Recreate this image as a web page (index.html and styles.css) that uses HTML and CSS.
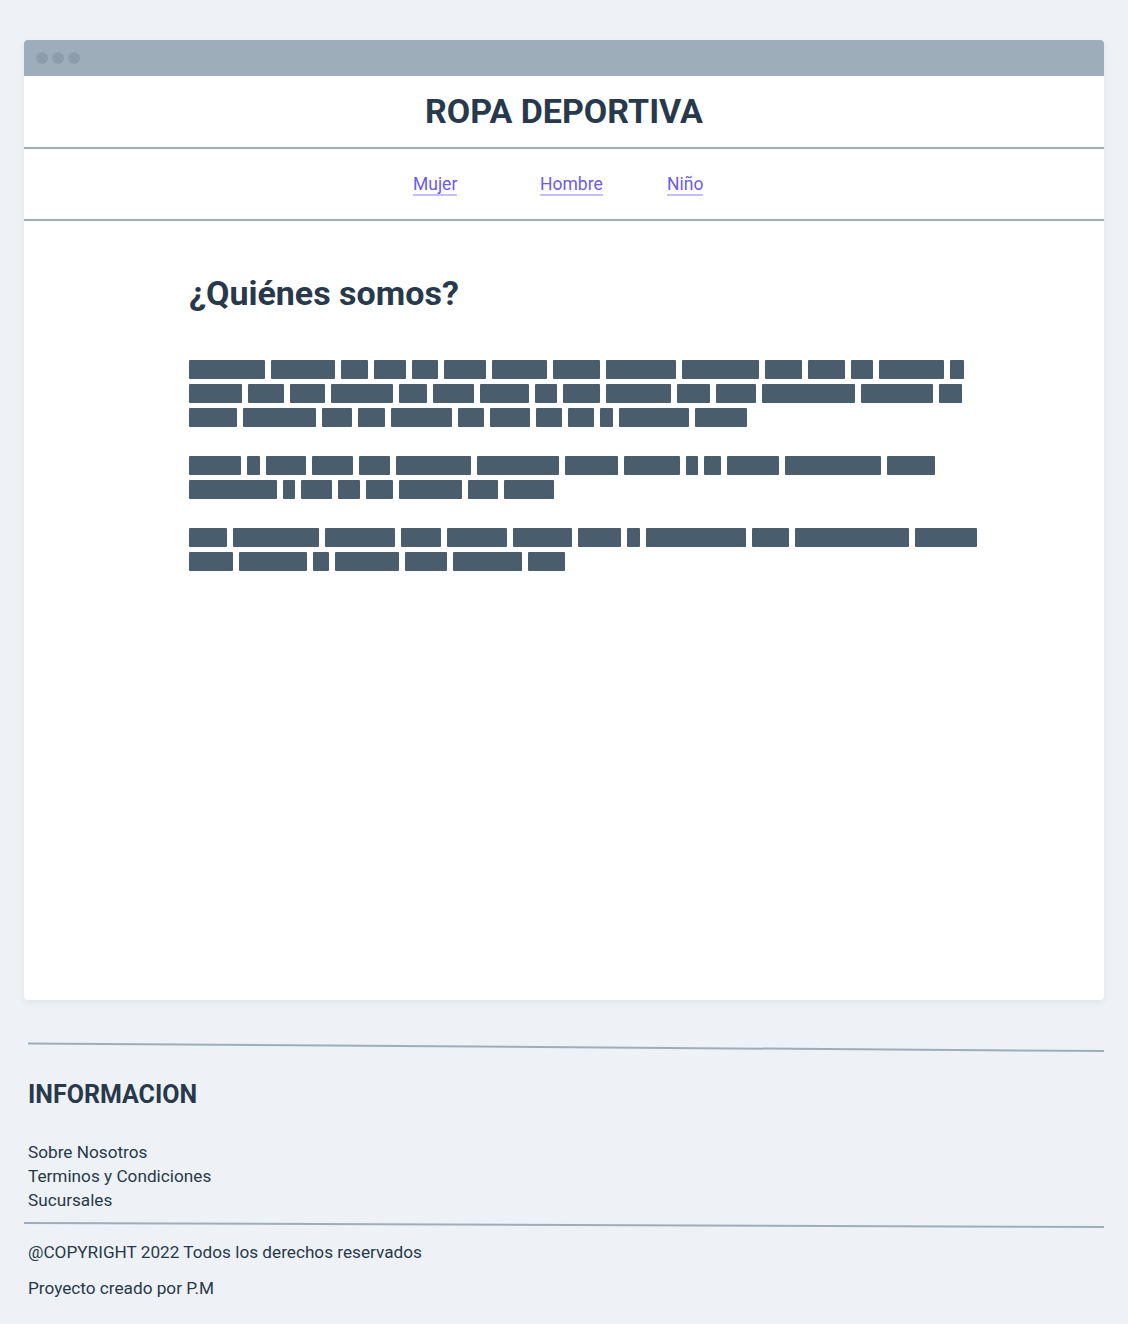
FILE: index.html
```html
<!DOCTYPE html>
<html lang="es">
<head>
<meta charset="utf-8">
<title>Ropa Deportiva</title>
<link rel="stylesheet" href="styles.css">
</head>
<body>
<div class="window">
  <div class="titlebar">
    <span class="dot"></span><span class="dot"></span><span class="dot"></span>
  </div>
  <header class="site-header">
    <h1 class="brand">ROPA DEPORTIVA</h1>
  </header>
  <nav class="nav">
    <ul class="nav-list">
      <li class="nav-item"><a class="nav-link" href="#">Mujer</a></li>
      <li class="nav-item"><a class="nav-link" href="#">Hombre</a></li>
      <li class="nav-item"><a class="nav-link" href="#">Niño</a></li>
    </ul>
  </nav>
  <main class="main">
    <h2 class="title">¿Quiénes somos?</h2>
    <div class="para">
      <div class="line"><span class="w" style="width:76px"></span><span class="w" style="width:64px"></span><span class="w" style="width:27px"></span><span class="w" style="width:32px"></span><span class="w" style="width:26px"></span><span class="w" style="width:42px"></span><span class="w" style="width:55px"></span><span class="w" style="width:47px"></span><span class="w" style="width:70px"></span><span class="w" style="width:77px"></span><span class="w" style="width:37px"></span><span class="w" style="width:37px"></span><span class="w" style="width:22px"></span><span class="w" style="width:65px"></span><span class="w" style="width:14px"></span></div>
      <div class="line"><span class="w" style="width:53px"></span><span class="w" style="width:36px"></span><span class="w" style="width:35px"></span><span class="w" style="width:62px"></span><span class="w" style="width:28px"></span><span class="w" style="width:41px"></span><span class="w" style="width:49px"></span><span class="w" style="width:22px"></span><span class="w" style="width:37px"></span><span class="w" style="width:65px"></span><span class="w" style="width:33px"></span><span class="w" style="width:40px"></span><span class="w" style="width:93px"></span><span class="w" style="width:72px"></span><span class="w" style="width:23px"></span></div>
      <div class="line"><span class="w" style="width:48px"></span><span class="w" style="width:73px"></span><span class="w" style="width:30px"></span><span class="w" style="width:27px"></span><span class="w" style="width:61px"></span><span class="w" style="width:26px"></span><span class="w" style="width:40px"></span><span class="w" style="width:26px"></span><span class="w" style="width:26px"></span><span class="w" style="width:13px"></span><span class="w" style="width:70px"></span><span class="w" style="width:52px"></span></div>
    </div>
    <div class="para">
      <div class="line"><span class="w" style="width:52px"></span><span class="w" style="width:13px"></span><span class="w" style="width:40px"></span><span class="w" style="width:41px"></span><span class="w" style="width:31px"></span><span class="w" style="width:75px"></span><span class="w" style="width:82px"></span><span class="w" style="width:53px"></span><span class="w" style="width:56px"></span><span class="w" style="width:12px"></span><span class="w" style="width:17px"></span><span class="w" style="width:52px"></span><span class="w" style="width:96px"></span><span class="w" style="width:48px"></span></div>
      <div class="line"><span class="w" style="width:88px"></span><span class="w" style="width:12px"></span><span class="w" style="width:31px"></span><span class="w" style="width:22px"></span><span class="w" style="width:27px"></span><span class="w" style="width:63px"></span><span class="w" style="width:30px"></span><span class="w" style="width:50px"></span></div>
    </div>
    <div class="para">
      <div class="line"><span class="w" style="width:38px"></span><span class="w" style="width:86px"></span><span class="w" style="width:70px"></span><span class="w" style="width:40px"></span><span class="w" style="width:60px"></span><span class="w" style="width:59px"></span><span class="w" style="width:43px"></span><span class="w" style="width:13px"></span><span class="w" style="width:100px"></span><span class="w" style="width:37px"></span><span class="w" style="width:114px"></span><span class="w" style="width:62px"></span></div>
      <div class="line"><span class="w" style="width:44px"></span><span class="w" style="width:68px"></span><span class="w" style="width:16px"></span><span class="w" style="width:64px"></span><span class="w" style="width:42px"></span><span class="w" style="width:69px"></span><span class="w" style="width:37px"></span></div>
    </div>
  </main>
</div>
<footer class="footer">
  <svg class="rule rule-top" viewBox="0 0 1076 10" preserveAspectRatio="none"><line x1="0" y1="1.5" x2="1076" y2="9" stroke="#9eadba" stroke-width="2"/></svg>
  <h3 class="footer-title">INFORMACION</h3>
  <ul class="footer-links">
    <li>Sobre Nosotros</li>
    <li>Terminos y Condiciones</li>
    <li>Sucursales</li>
  </ul>
  <svg class="rule rule-bottom" viewBox="0 0 1080 6" preserveAspectRatio="none"><line x1="0" y1="1" x2="1080" y2="5" stroke="#9eadba" stroke-width="2"/></svg>
  <p class="footer-text">@COPYRIGHT 2022 Todos los derechos reservados</p>
  <p class="footer-text">Proyecto creado por P.M</p>
</footer>
</body>
</html>
```

FILE: styles.css
```css
* { box-sizing: border-box; }

body {
  margin: 0;
  padding: 40px 24px 0;
  background: #eef2f6;
  font-family: Roboto, "Noto Sans", sans-serif;
  color: #27394a;
}

.window {
  background: #fff;
  border-radius: 4px;
  height: 960px;
  overflow: hidden;
  box-shadow: 0 2px 6px rgba(40, 60, 80, 0.08);
}

.titlebar {
  height: 36px;
  background: #9eadba;
  display: flex;
  align-items: center;
  gap: 4px;
  padding-left: 12px;
}

.dot {
  width: 12px;
  height: 12px;
  border-radius: 50%;
  background: #8d9dab;
}

.site-header {
  height: 73px;
  border-bottom: 2px solid #9eadba;
  display: flex;
  align-items: center;
  justify-content: center;
}

.brand {
  margin: 0;
  font-size: 34px;
  font-weight: 700;
  line-height: 40px;
  letter-spacing: 0;
  padding-bottom: 2px;
}

.nav {
  height: 72px;
  border-bottom: 2px solid #9eadba;
  display: flex;
  align-items: center;
}

.nav-list {
  list-style: none;
  margin: 0;
  padding: 0 0 0 389px;
  display: flex;
}

.nav-item {
  width: 127px;
}

.nav-link {
  color: #6c5ce7;
  text-decoration: none;
  font-size: 17.5px;
  line-height: 22px;
  border-bottom: 2px solid #c6c0f6;
}

.main {
  padding: 52px 0 0 165px;
}

.title {
  margin: 0 0 47px;
  font-size: 34px;
  line-height: 40px;
  font-weight: 700;
}

.para {
  display: flex;
  flex-direction: column;
  gap: 5px;
  margin-bottom: 29px;
}

.line {
  display: flex;
  gap: 6px;
}

.w {
  display: block;
  height: 19px;
  background: #4a5d6d;
  border-radius: 1px;
}

.footer {
  padding: 42px 0 20px 4px;
}

.rule {
  display: block;
}

.rule-top {
  width: 1076px;
  height: 10px;
}

.rule-bottom {
  width: 1080px;
  height: 6px;
  margin-left: -4px;
}

.footer-title {
  margin: 28px 0 30px;
  font-size: 25px;
  line-height: 30px;
  font-weight: 700;
}

.footer-links {
  list-style: none;
  margin: 0 0 10px;
  padding: 0;
  font-size: 17.2px;
  line-height: 24px;
}

.footer-text {
  margin: 12px 0 0;
  font-size: 17.2px;
  line-height: 24px;
}
```
